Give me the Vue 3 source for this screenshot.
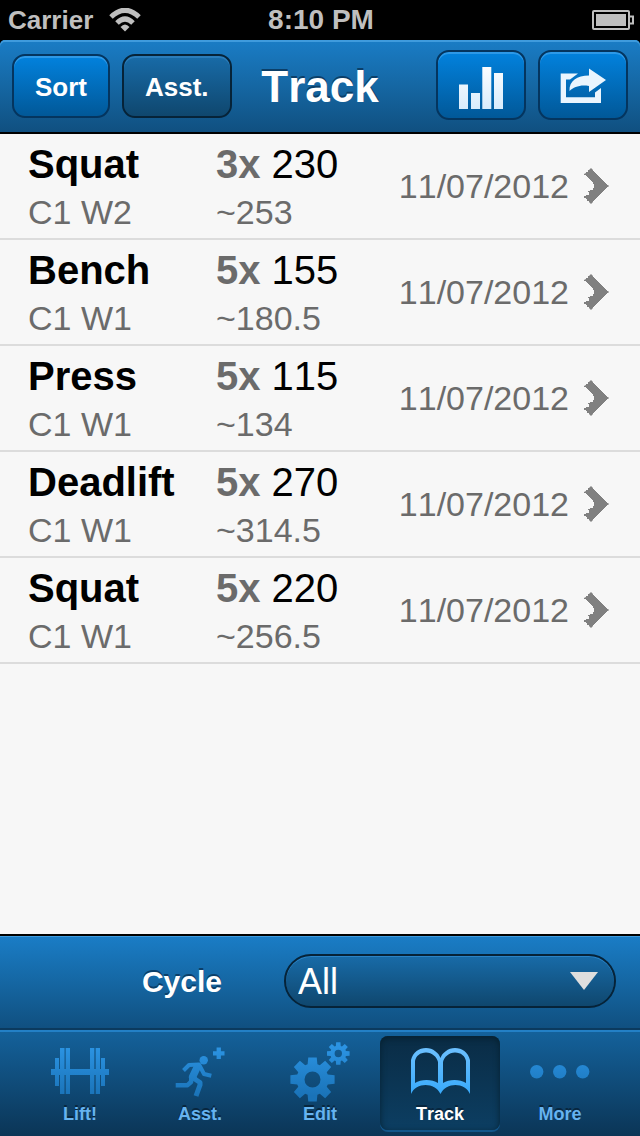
<script setup>
import { ref } from 'vue'

const entries = [
  { lift: 'Squat', week: 'C1 W2', reps: '3x', weight: '230', max: '~253', date: '11/07/2012' },
  { lift: 'Bench', week: 'C1 W1', reps: '5x', weight: '155', max: '~180.5', date: '11/07/2012' },
  { lift: 'Press', week: 'C1 W1', reps: '5x', weight: '115', max: '~134', date: '11/07/2012' },
  { lift: 'Deadlift', week: 'C1 W1', reps: '5x', weight: '270', max: '~314.5', date: '11/07/2012' },
  { lift: 'Squat', week: 'C1 W1', reps: '5x', weight: '220', max: '~256.5', date: '11/07/2012' }
]

const tabs = ['Lift!', 'Asst.', 'Edit', 'Track', 'More']
const active = ref('Track')
const cycle = ref('All')

// Outline of an eight-toothed gear with a round hole in the middle.
function gear(cx, cy, outer, root, hole) {
  const points = []
  for (let i = 0; i < 8; i++) {
    const a = (i * Math.PI) / 4
    for (const [r, d] of [[root, -0.31], [outer, -0.19], [outer, 0.19], [root, 0.31]]) {
      points.push(`${(cx + r * Math.sin(a + d)).toFixed(2)} ${(cy - r * Math.cos(a + d)).toFixed(2)}`)
    }
  }
  return `M${points.join('L')}Z M${cx - hole} ${cy}a${hole} ${hole} 0 1 0 ${hole * 2} 0a${hole} ${hole} 0 1 0 ${-hole * 2} 0Z`
}
const bigGear = gear(22.5, 37.5, 22.5, 16, 8)
const smallGear = gear(48.3, 11.5, 11.5, 8, 3.7)
</script>

<template>
  <div class="app">
    <div class="status">
      <div class="carrier">
        <span>Carrier</span>
        <svg width="32" height="24" viewBox="0 0 32 24" aria-hidden="true">
          <path d="M2 9Q16 -4.500 30 9" class="wave" />
          <path d="M8 15Q16 7 24 15" class="wave" />
          <path d="M11.500 19Q16 14 20.500 19L16 23.500Z" fill="#bfbfbf" />
        </svg>
      </div>
      <time>8:10 PM</time>
      <svg class="battery" width="42" height="20" viewBox="0 0 42 20" aria-hidden="true">
        <rect x="1" y="1" width="36" height="18" rx="1" fill="none" stroke="#bfbfbf" stroke-width="2" />
        <rect x="4" y="4" width="30" height="12" fill="#bfbfbf" />
        <path d="M38 6.500H41V13.500H38" fill="none" stroke="#bfbfbf" stroke-width="2" />
      </svg>
    </div>

    <header class="nav">
      <div class="group">
        <button type="button" class="btn">Sort</button>
        <button type="button" class="btn dark">Asst.</button>
      </div>
      <h1>Track</h1>
      <div class="group end">
        <button type="button" class="btn square" aria-label="Charts">
          <svg width="44" height="46" viewBox="0 0 44 46">
            <defs>
              <linearGradient id="ice" x1="0" y1="0" x2="0" y2="46" gradientUnits="userSpaceOnUse">
                <stop offset="0" stop-color="#ffffff" /><stop offset="1" stop-color="#d8ecfc" />
              </linearGradient>
            </defs>
            <path fill="url(#ice)" d="M0 21.500H9V46H0ZM12 30H21V46H12ZM23.300 4H32.300V46H23.300ZM35 10H44V46H35Z" />
          </svg>
        </button>
        <button type="button" class="btn square" aria-label="Share">
          <svg width="46" height="36" viewBox="560 67.500 46 36">
            <g fill="#eaf5fe">
              <path d="M560.700 73H578L570 79H566V96.700H595V92L601 87.500V102.600H560.700Z" />
              <path d="M589 68L606 79.500L589 91.500V85.500C580 84 574 86.500 569.500 90.500C569 80.500 577 75 589 75Z" />
            </g>
          </svg>
        </button>
      </div>
    </header>

    <main>
      <ul class="list">
        <li v-for="(e, i) in entries" :key="i">
          <a href="#" class="row">
            <span class="cell">
              <strong>{{ e.lift }}</strong>
              <span class="sub">{{ e.week }}</span>
            </span>
            <span class="cell">
              <span class="weight"><b>{{ e.reps }}</b> {{ e.weight }}</span>
              <span class="sub">{{ e.max }}</span>
            </span>
            <span class="date">{{ e.date }}</span>
            <svg width="25" height="36" viewBox="0 0 25 36" aria-hidden="true">
              <path fill="#808080" d="M7 0L9 2V3H10V4H11V5H12V6H13V7H14V8H15V9H16V10H17V11H18V12H19V13H20V14H21V15H22V16H23V17H24.500V19H23V20H22V21H21V22H20V23H19V24H18V25H17V26H16V27H15V28H14V29H13V30H12V31H11V32H10V33H9V34L7 36L5 34V33H3V31H2V30H0V28H2V27H5V24H4V23H6V22H9V20H10V16H9V14H8V13H7V12H6V11H5V10H4V9H3V8H2V7H0V6L2 5V4H4V2H5Z" />
            </svg>
          </a>
        </li>
      </ul>
    </main>

    <div class="filter">
      <label for="cycle">Cycle</label>
      <div class="picker">
        <select id="cycle" v-model="cycle">
          <option>All</option>
          <option>1</option>
        </select>
        <svg width="28" height="18" viewBox="0 0 28 18" aria-hidden="true">
          <path d="M0 0H28L14 18Z" fill="#dedede" />
        </svg>
      </div>
    </div>

    <nav class="tabs">
      <button
        v-for="t in tabs"
        :key="t"
        type="button"
        class="tab"
        :class="{ active: active === t }"
        @click="active = t"
      >
        <svg width="60" height="60" viewBox="0 0 60 60" aria-hidden="true">
          <defs>
            <linearGradient :id="'tint' + t.length + t[0]" x1="0" y1="6" x2="0" y2="54" gradientUnits="userSpaceOnUse">
              <stop offset="0" :stop-color="active === t ? '#6cc0ff' : '#2b93e2'" />
              <stop offset="1" :stop-color="active === t ? '#36a9fb' : '#1a73b8'" />
            </linearGradient>
          </defs>
          <g :fill="`url(#tint${t.length}${t[0]})`">
            <path v-if="t === 'Lift!'" d="M1 27H5V16H9V27H10V6H14.500V27H15.700V6H20V27H40V6H44.300V27H45.700V6H50V27H51V16H55V27H59V33H55V44H51V33H50V52H45.700V33H44.300V52H40V33H20V52H15.700V33H14.500V52H10V33H9V44H5V33H1Z" />
            <g v-else-if="t === 'Asst.'">
              <path d="M46.600 5.600H50.900V9.200H54.500V13.500H50.900V17H46.600V13.500H43V9.200H46.600Z" />
              <circle cx="33.700" cy="18.300" r="4.200" />
              <g fill="none" :stroke="`url(#tint${t.length}${t[0]})`" stroke-linejoin="round">
                <path stroke-width="4" d="M13.500 28.500L19 23L29 22.500L34 32L41.300 33.800" />
                <path stroke-width="7.500" d="M28 23.500L22.500 35L24 37.500" />
                <path stroke-width="5" d="M22.500 35.500L30 40.500L30 43L26 54" />
                <path stroke-width="4.500" d="M21.500 35L21 40L17.500 43.200H5.700" />
              </g>
            </g>
            <g v-else-if="t === 'Edit'" fill-rule="evenodd">
              <path :d="bigGear" />
              <path :d="smallGear" />
            </g>
            <path v-else-if="t === 'Track'" fill-rule="evenodd" d="M1 52V18C3 10 9 6 16 6C23 6 29 11 30.500 16C32 11 38 6 45 6C52 6 58 10 60 18V52C55 40 36 40 30.500 52C25 40 6 40 1 52ZM5 41V19C6 14 10 10.500 16 10.500C22 10.500 27 15 28 20V41C22 37 11 37 5 41ZM33 41V20C34 15 39 10.500 45 10.500C51 10.500 55 14 56 19V41C50 37 39 37 33 41Z" />
            <g v-else>
              <circle cx="6.700" cy="29.700" r="6.700" />
              <circle cx="29.700" cy="29.700" r="6.700" />
              <circle cx="52.700" cy="29.700" r="6.700" />
            </g>
          </g>
        </svg>
        <span>{{ t }}</span>
      </button>
    </nav>
  </div>
</template>

<style>
body {
  margin: 0;
  background: #000;
}
</style>

<style scoped>
.app {
  min-height: 100vh;
  display: flex;
  flex-direction: column;
  background: #000;
  font-family: "Liberation Sans", Arial, Helvetica, sans-serif;
  font-kerning: none;
}
.app * {
  box-sizing: border-box;
}
svg {
  display: block;
  flex: none;
}
button,
select {
  font-family: inherit;
  font-kerning: none;
  cursor: pointer;
}

.status {
  height: 40px;
  padding: 0 6px 0 8px;
  display: grid;
  grid-template-columns: 1fr auto 1fr;
  align-items: center;
  color: #bfbfbf;
  font-weight: bold;
  font-size: 28px;
  line-height: 40px;
}
.carrier {
  display: flex;
  align-items: center;
  gap: 16px;
  font-size: 26px;
}
.wave {
  fill: none;
  stroke: #bfbfbf;
  stroke-width: 5;
}
.battery {
  justify-self: end;
}

.nav {
  height: 94px;
  padding: 0 12px 2px;
  display: grid;
  grid-template-columns: 1fr auto 1fr;
  align-items: center;
  border-bottom: 2px solid #000;
  border-radius: 5px 5px 0 0;
  background: linear-gradient(#1a7dc6, #105080);
  box-shadow: inset 0 2px 0 #3f9bdd;
}
.group {
  display: flex;
  align-items: center;
  gap: 12px;
}
.end {
  justify-content: flex-end;
}
h1 {
  margin: 0;
  padding-top: 4px;
  color: #fff;
  font-size: 44px;
  line-height: 50px;
  text-shadow: 0 -2px 0 #0b3f69;
}
.btn {
  height: 64px;
  padding: 2px 20px 0;
  display: flex;
  align-items: center;
  justify-content: center;
  border: 2px solid #04355f;
  border-radius: 13px;
  background: linear-gradient(#0282de, #015898) padding-box;
  box-shadow: inset 0 2px 0 #2d99e8;
  color: #fff;
  font-size: 26px;
  font-weight: bold;
  line-height: 30px;
}
.group:first-child {
  padding-top: 2px;
}
.group:first-child .btn {
  padding: 2px 21px 0;
}
.btn.dark {
  border-color: #062338;
  background: linear-gradient(#186ba8, #0f476e) padding-box;
  box-shadow: inset 0 2px 0 #2a7cba;
}
.square {
  width: 90px;
  height: 70px;
}

main {
  flex: 1;
  background: #f7f7f7;
}
.list {
  margin: 0;
  padding: 0;
  list-style: none;
}
.row {
  height: 106px;
  padding: 0 31px 0 28px;
  display: grid;
  grid-template-columns: 188px 1fr auto auto;
  align-items: center;
  border-bottom: 2px solid #dcdcdc;
  color: #000;
  font-size: 40px;
  line-height: 48px;
  text-decoration: none;
}
.cell {
  padding-top: 4px;
  display: flex;
  flex-direction: column;
}
.weight b,
.sub,
.date {
  color: #6b6b6b;
}
.sub,
.date {
  font-size: 34px;
}
.date {
  margin-right: 15px;
}

.filter {
  height: 96px;
  padding: 0 24px 2px 0;
  display: grid;
  grid-template-columns: 222fr 332fr;
  column-gap: 62px;
  align-items: center;
  border-top: 2px solid #000;
  border-bottom: 2px solid #0b3a5e;
  background: linear-gradient(#1a7dc6, #105080);
  box-shadow: inset 0 1px 0 #3f9bdd;
}
.filter label {
  padding-top: 2px;
  color: #fff;
  font-size: 30px;
  font-weight: bold;
  line-height: 36px;
  text-align: right;
  text-shadow: 0 -2px 0 #0b3f69;
}
.picker {
  display: grid;
  align-items: center;
}
.picker > * {
  grid-area: 1 / 1;
}
.picker svg {
  justify-self: end;
  margin-right: 18px;
  pointer-events: none;
}
.picker select {
  width: 100%;
  height: 54px;
  padding: 0 50px 0 12px;
  appearance: none;
  border: 2px solid #062338;
  border-radius: 27px;
  background: linear-gradient(#186ba8, #0f476e) padding-box;
  box-shadow: inset 0 1px 0 #2a83c6;
  color: #fff;
  font-size: 36px;
}

.tabs {
  height: 106px;
  padding: 6px 20px;
  display: grid;
  grid-template-columns: repeat(5, 1fr);
  background: linear-gradient(#14629c, #0b3556);
  box-shadow: inset 0 2px 0 #2380c6;
}
.tab {
  padding: 6px 0;
  display: flex;
  flex-direction: column;
  align-items: center;
  gap: 2px;
  border: 0;
  border-radius: 8px;
  background: none;
  color: #66b3f0;
  font-size: 18px;
  font-weight: bold;
  line-height: 20px;
  text-shadow: 0 -2px 0 #08263e;
}
.active {
  background: linear-gradient(#0a2c45, #0c3e62);
  box-shadow: inset 0 2px 6px #06202f, 0 2px 0 #12568a;
  color: #fff;
}
</style>
